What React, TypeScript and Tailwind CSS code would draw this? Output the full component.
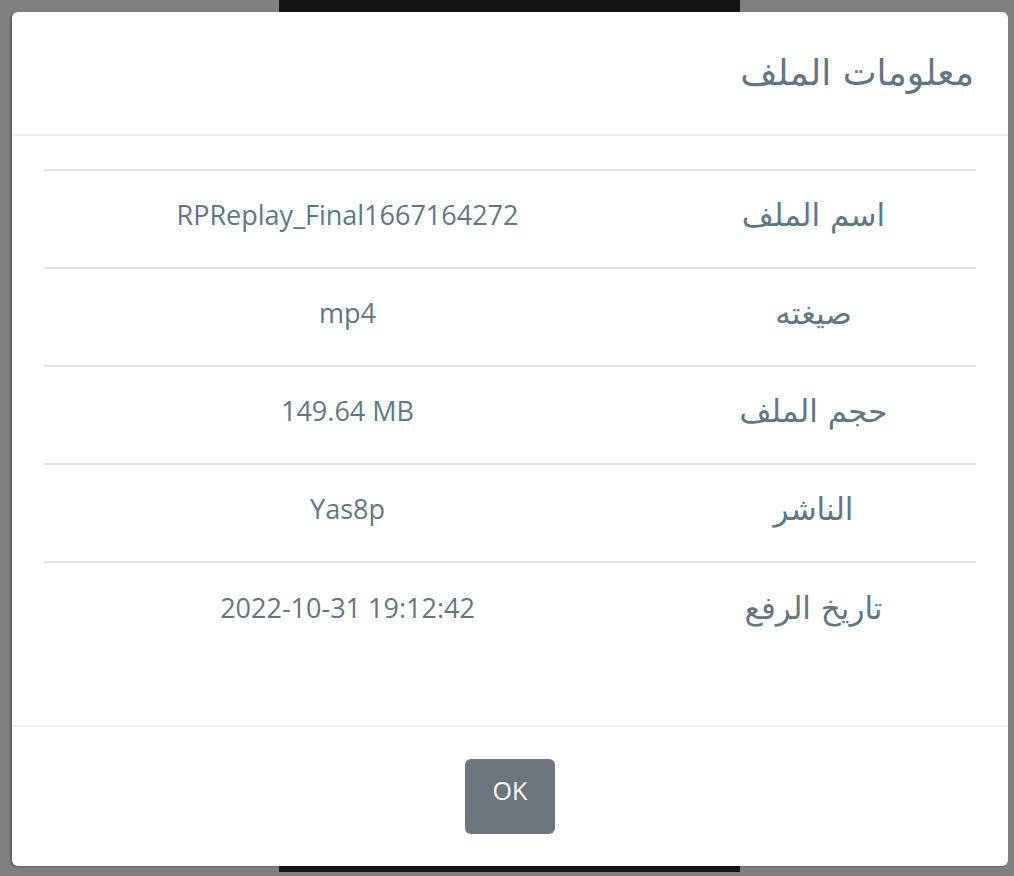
import React from "react";

const rows: [string, string][] = [
  ["اسم الملف", "RPReplay_Final1667164272"],
  ["صيغته", "mp4"],
  ["حجم الملف", "149.64 MB"],
  ["الناشر", "Yas8p"],
  ["تاريخ الرفع", "2022-10-31 19:12:42"],
];

const arabic = { fontFamily: '"DejaVu Sans", "Noto Sans", sans-serif' };

export default function App() {
  return (
    <div
      className="relative h-[876px] w-[1014px] overflow-hidden bg-[#808080] pt-[12px] pl-[12px]"
      style={{ fontFamily: '"Open Sans", "DejaVu Sans", sans-serif' }}
    >
      {/* video behind the overlay */}
      <div className="absolute left-[279px] top-0 h-[872px] w-[461px] bg-[#151515]" />

      <div
        dir="rtl"
        className="relative flex h-[854px] w-[996px] flex-col rounded-[6px] bg-white shadow-[-2px_1px_2px_rgba(0,0,0,0.25)]"
      >
        <div className="flex h-[124px] items-center border-b-2 border-[#ececf1] px-[34px]">
          <h2 className="text-[36px] leading-none text-[#5f7785]" style={arabic}>
            معلومات الملف
          </h2>
        </div>

        <div className="flex-1 px-[32px] pt-[33px]">
          <div className="border-t-2 border-[#dee2e6]">
            {rows.map(([label, value], i) => (
              <div
                key={label}
                className={
                  "grid h-[98px] grid-cols-[325px_1fr] items-center pb-[8px] " +
                  (i < rows.length - 1 ? "border-b-2 border-[#dee2e6]" : "")
                }
              >
                <div className="text-center text-[31px] font-medium text-[#5f7785]" style={arabic}>
                  {label}
                </div>
                <div dir="ltr" className="text-center text-[27px] text-[#5f7785]">
                  {value}
                </div>
              </div>
            ))}
          </div>
        </div>

        <div className="flex h-[141px] items-center justify-center border-t-2 border-[#ececf1]">
          <button className="h-[75px] w-[90px] rounded-[6px] bg-[#6c757d] pb-[12px] text-[25px] text-white">
            OK
          </button>
        </div>
      </div>
    </div>
  );
}
